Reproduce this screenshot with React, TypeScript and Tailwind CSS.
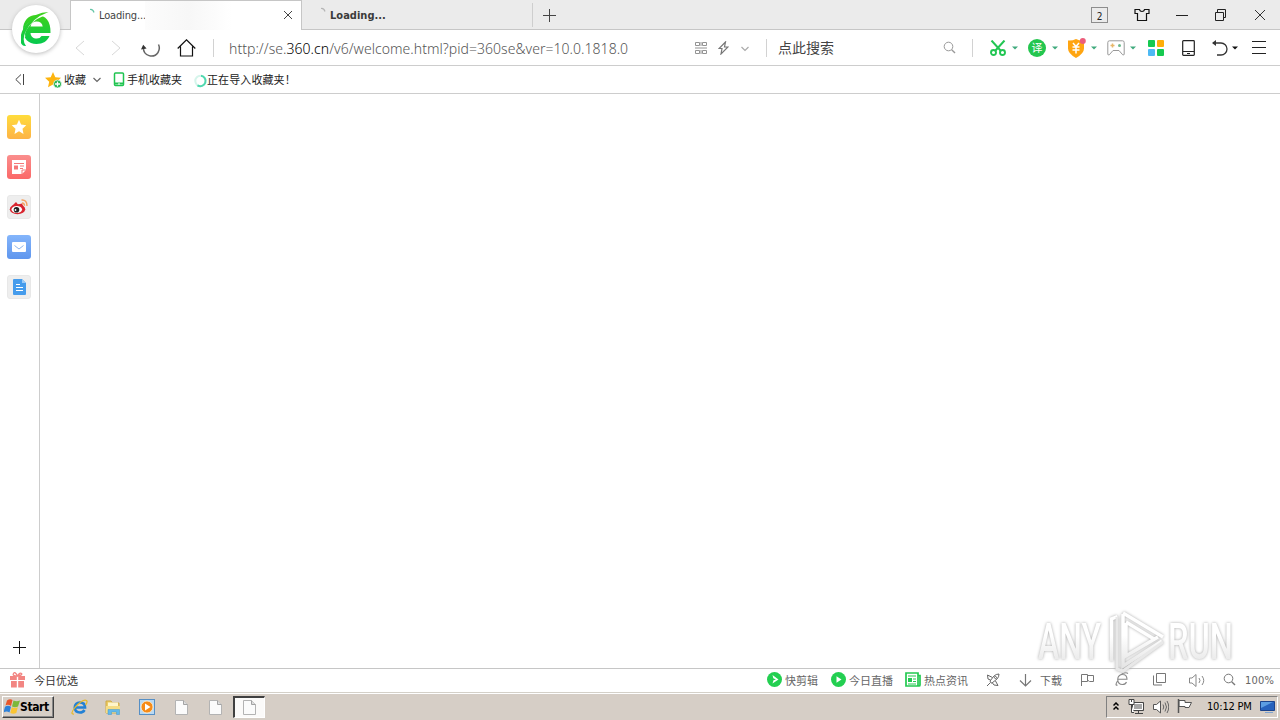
import type { ReactNode } from "react";

type IconProps = { w: number; h: number; className?: string; children: ReactNode };

function Icon({ w, h, className = "", children }: IconProps) {
  return (
    <svg
      width={w}
      height={h}
      viewBox={`0 0 ${w} ${h}`}
      fill="none"
      stroke="currentColor"
      className={`shrink-0 ${className}`}
    >
      {children}
    </svg>
  );
}

function Caret({ className = "" }: { className?: string }) {
  return (
    <Icon w={6} h={4} className={className}>
      <path d="M0 .5h6L3 3.5z" fill="currentColor" stroke="none" />
    </Icon>
  );
}

function Spinner({ className = "" }: { className?: string }) {
  return (
    <Icon w={8} h={8} className={className}>
      <path d="M2 1.500q3-.5 4 3" strokeWidth="1.2" />
    </Icon>
  );
}

function Magnifier({ className = "" }: { className?: string }) {
  return (
    <Icon w={13} h={13} className={className}>
      <circle cx="5.5" cy="5.5" r="4.3" />
      <path d="M8.7 8.7l3.3 3.3" strokeWidth="1.4" />
    </Icon>
  );
}

function TabBar() {
  return (
    <div className="flex h-[30px] shrink-0 items-center border-b border-[#c6c6c6] bg-[#ebebeb] pl-[70px]">
      <div className="-mb-px flex h-[30px] w-[232px] shrink-0 items-center border-x border-t border-[#c6c6c6] bg-white">
        <Spinner className="-mt-2 ml-[17px] text-[#63c5a6]" />
        <span className="ml-[3px] w-[46px] whitespace-nowrap pt-px text-[11px] tracking-[-0.15px] text-[#444]">Loading...</span>
        <div className="h-full w-[87px] bg-linear-to-r from-[#fcfcfc] via-[#f7f7f7] to-white" />
        <Icon w={10} h={10} className="-mt-px ml-[51px] text-[#444]">
          <path d="M1 1l8 8M9 1L1 9" />
        </Icon>
      </div>
      <Spinner className="-mt-2 ml-[17px] text-[#b5b5b5]" />
      <span className="ml-[3px] w-[202px] whitespace-nowrap pt-[3px] text-[11px] font-bold tracking-[0.02px] text-[#3b3b3b]">Loading...</span>
      <div className="h-6 w-px bg-[#cecece]" />
      <Icon w={13} h={13} className="ml-[10px] mt-px text-[#444]">
        <path d="M6.500 0v13M0 6.500h13" />
      </Icon>
      <div className="ml-[535px] mt-px flex h-4 w-[17px] items-center justify-center border border-[#8d8d8d] pt-[2px] text-[10px] text-[#222]">2</div>
      <Icon w={16} h={14} className="ml-[26px] text-[#111]">
        <path d="M5.400 1.500L1 1.500V5.500h2.500V12.500h9V5.500H15V1.500H10.600Q10 3.500 8 3.500T5.400 1.500z" strokeWidth="1.2" />
      </Icon>
      <Icon w={12} h={12} className="ml-[26px] text-[#222]">
        <path d="M0 6.500h12" />
      </Icon>
      <Icon w={11} h={12} className="ml-[27px] text-[#222]">
        <path d="M.5 3.500h8v8h-8zM2.500 3.500v-3h8v8h-2" />
      </Icon>
      <Icon w={12} h={12} className="ml-[28px] text-[#333]">
        <path d="M1 1l10 10M11 1L1 11" />
      </Icon>
    </div>
  );
}

function Toolbar() {
  return (
    <div className="flex h-9 shrink-0 items-center border-b border-[#cdcdcd] bg-white pl-[75px]">
      <Icon w={10} h={16} className="text-[#d8d8d8]"><path d="M9 1L1 8l8 7" /></Icon>
      <Icon w={10} h={16} className="ml-[26px] text-[#d8d8d8]"><path d="M1 1l8 7-8 7" /></Icon>
      <Icon w={20} h={18} className="ml-[20px] text-[#666]">
        <path d="M2.400 9A8 8 0 0 0 17 13.500Q19.400 9.500 17.500 5.500" strokeWidth="1.500" />
        <path d="M0 10.500l2.200-4.700 3.400 3.700z" fill="#333" stroke="none" />
      </Icon>
      <Icon w={19} h={18} className="ml-[16px] text-[#111]">
        <path d="M.7 9.500L9.500 .8l8.800 8.700M3.500 7.500v9.500h12V7.500" strokeWidth="1.200" />
      </Icon>
      <div className="ml-[17px] h-[18px] w-px bg-[#d2d2d2]" />
      <div className="ml-[15px] mt-[2px] w-[465px] whitespace-nowrap font-['Noto_Sans'] text-[14px] font-light tracking-[0.04px] text-[#555]">
        http://se.<span className="text-black">360.cn</span>/v6/welcome.html?pid=360se&amp;ver=10.0.1818.0
      </div>
      <Icon w={12} h={12} className="ml-[1px] text-[#888]">
        <path d="M.5 .5h4v3h-4zM7.500 .5h4v3h-4zM.5 8.500h4v3h-4zM7.500 8.500h4v3h-4zM0 6h12M6 0v4M6 8v4" strokeWidth=".9" />
      </Icon>
      <Icon w={11} h={14} className="ml-[11px] text-[#777]">
        <path d="M7.500 1L1 7.500h3L3 13l7-7H6.500z" strokeWidth="1.200" />
      </Icon>
      <Icon w={8} h={6} className="ml-[12px] mt-[2px] text-[#aaa]"><path d="M.5 1L4 4.500 7.500 1" strokeWidth="1.200" /></Icon>
      <div className="ml-[17px] h-[18px] w-px bg-[#d2d2d2]" />
      <span className="ml-[11px] w-[165px] pt-[2px] text-[14px] text-[#444]">点此搜索</span>
      <Magnifier className="-mt-px text-[#999]" />
      <div className="ml-[16px] h-[18px] w-px bg-[#d2d2d2]" />
      <Icon w={16} h={16} className="ml-[17px] text-[#22c653]">
        <path d="M1.500 .5l9 10M14.500 .5l-9 10" strokeWidth="2" />
        <circle cx="3.500" cy="12.500" r="2.500" strokeWidth="1.900" />
        <circle cx="12.500" cy="12.500" r="2.500" strokeWidth="1.900" />
      </Icon>
      <Caret className="ml-[6px] text-[#3faa7d]" />
      <div className="ml-[10px] flex size-[18px] shrink-0 items-center justify-center rounded-full bg-[#24c64f] pt-px text-[11px] leading-none text-white">译</div>
      <Caret className="ml-[6px] text-[#3faa7d]" />
      <Icon w={19} h={20} className="ml-[9px] text-white">
        <path d="M9 1q4 2 8 1.500v8q0 5-8 9.500-8-4.500-8-9.500v-8Q5 3 9 1z" fill="#ffa511" stroke="none" />
        <path d="M6 5l3 3.500L12 5M5.500 9h7M5.500 12h7M9 8.500v7" strokeWidth="1.500" />
        <circle cx="15.800" cy="3" r="3" fill="#ec5d7b" stroke="none" />
      </Icon>
      <Caret className="ml-[5px] text-[#3faa7d]" />
      <Icon w={18} h={16} className="ml-[10px] text-[#999]">
        <path d="M2.500 .8h13q1.700 0 1.700 1.700V14q0 1.500-1.500 .8L12 10.500H6l-3.700 4.300Q.8 15.500.8 14V2.500Q.8 .8 2.500 .8z" />
        <path d="M3.500 5.500h4M5.500 3.500v4" stroke="#e7b76a" strokeWidth="1.500" />
        <circle cx="12.500" cy="5.500" r="1.500" fill="#6bb98c" stroke="none" />
      </Icon>
      <Caret className="ml-[5px] text-[#3faa7d]" />
      <div className="ml-[12px] grid shrink-0 grid-cols-[7px_7px] gap-[2px]">
        <div className="size-[7px] rounded-[1px] bg-[#16c950]" />
        <div className="size-[7px] rounded-[1px] bg-[#ffae08]" />
        <div className="size-[7px] rounded-[1px] bg-[#4db9f4]" />
        <div className="size-[7px] rounded-[1px] bg-[#16c950]" />
      </div>
      <Icon w={13} h={16} className="ml-[18px] text-[#222]">
        <path d="M.7 1.500q0-.8.800-.8h10q.8 0 .8.800v13q0 .8-.8.800h-10q-.8 0-.8-.800zM1 11.500h11M5 13.500h3" strokeWidth="1.200" />
      </Icon>
      <Icon w={16} h={16} className="ml-[17px] text-[#333]">
        <path d="M1 3h8a6 6 0 0 1 0 12H5" strokeWidth="1.300" />
        <path d="M0 3L4 0v6z" fill="currentColor" stroke="none" />
      </Icon>
      <Caret className="ml-[4px] text-[#111]" />
      <Icon w={14} h={13} className="ml-[14px] text-[#222]">
        <path d="M0 .5h14M0 6.500h14M0 12.500h14" />
      </Icon>
    </div>
  );
}

function BookmarksBar() {
  return (
    <div className="flex h-7 shrink-0 items-center border-b border-[#cdcdcd] bg-white pl-[15px] text-[11px] text-[#222]">
      <Icon w={10} h={11} className="text-[#444]"><path d="M6 .5L.800 5.500 6 10.500M8.500 0v11" /></Icon>
      <Icon w={17} h={16} className="ml-[20px]">
        <path d="M8 0l2.300 5.200 5.700.6-4.200 3.900 1.200 5.600L8 12.500l-5 2.800 1.200-5.600L0 5.800l5.700-.6z" fill="#fdb40e" stroke="none" />
        <circle cx="12.500" cy="12" r="4" fill="#21b24d" stroke="white" strokeWidth=".7" />
        <path d="M10 12h5M12.500 9.500v5" stroke="white" strokeWidth="1.300" />
      </Icon>
      <span className="ml-[2px] w-[22px] whitespace-nowrap pt-[3px]">收藏</span>
      <Icon w={8} h={6} className="ml-[7px] mt-px text-[#666]"><path d="M.5 1L4 4.500 7.500 1" strokeWidth="1.200" /></Icon>
      <Icon w={12} h={15} className="ml-[12px] text-[#20c450]">
        <rect x="1.500" y="1" width="9" height="12.500" rx="1" strokeWidth="1.500" />
        <path d="M2 11.500h8" strokeWidth="2" />
        <path d="M5 12h2" stroke="white" />
      </Icon>
      <span className="ml-[2px] w-[55px] whitespace-nowrap pt-[3px]">手机收藏夹</span>
      <Icon w={14} h={14} className="ml-[12px] mt-[3px] text-[#50d8af]">
        <circle cx="6.500" cy="7" r="5.200" stroke="#d5f5eb" strokeWidth="2" />
        <path d="M7 1.800a5.200 5.200 0 1 1-3.500 9.500" strokeWidth="2" />
      </Icon>
      <span className="-ml-px whitespace-nowrap pt-[3px] tracking-[0.1px]">正在导入收藏夹！</span>
    </div>
  );
}

function Sidebar() {
  return (
    <div className="flex w-10 shrink-0 flex-col border-r border-[#cdcdcd] bg-white pl-[7px] pt-[21px]">
      <div className="flex flex-col gap-4">
        <div className="flex size-6 items-center justify-center rounded-[3px] bg-linear-to-b from-[#ffdc3b] to-[#fdb346]">
          <Icon w={16} h={16}>
            <path d="M8 .8l2.100 4.800 5.200.6-3.800 3.500 1 5.200L8 12.300l-4.500 2.600 1-5.200L.7 6.200l5.200-.6z" fill="white" stroke="none" />
          </Icon>
        </div>
        <div className="flex size-6 items-center justify-center rounded-[3px] bg-linear-to-b from-[#fa8e8d] to-[#fb6868]">
          <Icon w={14} h={14}>
            <path d="M0 0h14v10l-4 4H0z" fill="white" stroke="none" />
            <path d="M2 3.500h10M8 6h4M8 8.500h3" stroke="#f47878" />
            <path d="M2 5.500h4v4H2z" fill="#f47878" stroke="none" />
            <path d="M10 14v-4h4" stroke="#f47878" />
          </Icon>
        </div>
        <div className="flex size-6 items-center justify-center rounded-[3px] border border-[#e8e8e8] bg-[#eeeeee]">
          <Icon w={20} h={18}>
            <ellipse cx="8.500" cy="11.300" rx="7.700" ry="5" fill="#d9252f" stroke="none" />
            <path d="M3 8l4-4 2 2.500 4-1 1.500 3.500-4 3z" fill="#d9252f" stroke="none" />
            <ellipse cx="7.800" cy="11.500" rx="5.300" ry="3.500" fill="white" stroke="none" />
            <circle cx="7.500" cy="11.700" r="2.800" fill="#222" stroke="none" />
            <circle cx="6.500" cy="12" r=".9" fill="white" stroke="none" />
            <path d="M12.500 2q5.500-.5 5.500 6M13 5q2.500 0 2.500 2.800" stroke="#f5a160" strokeWidth="1.400" />
          </Icon>
        </div>
        <div className="flex size-6 items-center justify-center rounded-[3px] bg-linear-to-b from-[#84b5fb] to-[#5f96ee]">
          <Icon w={14} h={10}>
            <rect width="14" height="10" rx="1" fill="white" stroke="none" />
            <path d="M2.500 3.500L7 7l4.500-3.500" stroke="#8eb5ee" />
          </Icon>
        </div>
        <div className="flex size-6 items-center justify-center rounded-[3px] border border-[#e8e8e8] bg-[#eeeeee]">
          <Icon w={13} h={16}>
            <path d="M1 0h8l4 4v11q0 1-1 1H1q-1 0-1-1V1q0-1 1-1z" fill="#469cec" stroke="none" />
            <path d="M9 0v4h4" fill="#9dccf8" stroke="none" />
            <path d="M3 5.500h4M3 8.500h7M3 11.500h7" stroke="white" />
          </Icon>
        </div>
      </div>
      <Icon w={13} h={13} className="mb-[14px] ml-[6px] mt-auto text-[#111]">
        <path d="M6.500 0v13M0 6.500h13" />
      </Icon>
    </div>
  );
}

function StatusBar() {
  return (
    <div className="flex h-6 shrink-0 items-center border-t border-[#c6c6c6] bg-white pl-[10px] text-[11px] text-[#666]">
      <Icon w={15} h={16} className="-mt-[2px]">
        <path d="M7.500 4Q2 4 3.500 1.500T7.500 4Q10 0 11.500 1.500T7.500 4" stroke="#f28582" strokeWidth="1.300" />
        <path d="M0 4h6.800v4H0zM8.200 4H15v4H8.200zM1 9h5.800v6.500H1zM8.200 9H14v6.500H8.200z" fill="#f28582" stroke="none" />
      </Icon>
      <span className="ml-[9px] w-[733px] pt-[3px] text-[#333]">今日优选</span>
      <Icon w={15} h={15} className="-mt-[2px]">
        <circle cx="7.500" cy="7.500" r="7.500" fill="#23cf51" stroke="none" />
        <path d="M5.500 3l6 4.500-6 4 1-3.200L9 7.500 6.300 6.300z" fill="white" stroke="none" />
      </Icon>
      <span className="ml-[3px] w-[46px] whitespace-nowrap pt-[3px]">快剪辑</span>
      <Icon w={15} h={15} className="-mt-[2px]">
        <circle cx="7.500" cy="7.500" r="7.500" fill="#23cf51" stroke="none" />
        <path d="M5.500 4.200l5 3.300-5 3.300z" fill="white" stroke="none" />
      </Icon>
      <span className="ml-[3px] w-[56px] whitespace-nowrap pt-[3px]">今日直播</span>
      <Icon w={16} h={15} className="-mt-[2px] text-[#23c950]">
        <path d="M1 1h12v13H1zM13 3.500h2V13q0 1-1 1H2" strokeWidth="1.700" />
        <path d="M3 4h8M8 7h3M8 9.500h3M3 12h8" />
        <path d="M3 6h4v4H3z" fill="currentColor" stroke="none" />
      </Icon>
      <span className="ml-[3px] w-[62px] whitespace-nowrap pt-[3px]">热点资讯</span>
      <Icon w={14} h={14} className="-mt-px text-[#666]">
        <path d="M5 10L4 8l4-5q2-2 5-2 0 3-2 5l-5 4zM6.500 4.500L1.500 2l.5 4 2.500 1M9.500 8l2.500 4.500-4-.5-1.500-2M1 13l3-3" />
        <circle cx="9.500" cy="4.500" r="1" />
      </Icon>
      <Icon w={13} h={13} className="ml-[19px] text-[#777]"><path d="M6.500 0v12M1 6.500L6.500 12 12 6.500" strokeWidth="1.200" /></Icon>
      <span className="ml-[8px] w-[41px] whitespace-nowrap pt-[3px]">下载</span>
      <Icon w={14} h={12} className="-mt-px text-[#777]">
        <path d="M.5 12V.5h6v7h-6M6.500 1.500h6v6h-4l-2-1.500" />
      </Icon>
      <Icon w={16} h={14} className="ml-[19px] -mt-[3px] text-[#888]">
        <path d="M3.800 7.300H13Q13 2.500 8.500 2.500T3.700 7.500Q4 12.500 8.500 12.500 11.500 12.500 12.500 10M3.500 9Q.5 14 3.500 13M5 4Q11-.8 14 1.500" strokeWidth="1.100" />
      </Icon>
      <Icon w={14} h={13} className="ml-[22px] -mt-[2px] text-[#777]">
        <path d="M4.500 .5h9v9h-9zM1.500 2.500v9.500H10" />
      </Icon>
      <Icon w={16} h={13} className="ml-[23px] -mt-px text-[#888]">
        <path d="M.5 4H3l4-3.500v12L3 9H.5zM10 4q2 2.500 0 5M13 2q3.500 4.500 0 9" />
      </Icon>
      <Magnifier className="ml-[18px] -mt-[2px] text-[#777]" />
      <span className="ml-[9px] whitespace-nowrap pt-[2px] text-[11px] tracking-[0.2px]">100%</span>
    </div>
  );
}

function FileIcon({ className = "" }: { className?: string }) {
  return (
    <Icon w={13} h={15} className={className}>
      <path d="M.5 .5h8l4 4v10H.5z" fill="#fbfbfb" stroke="#b3b3b3" />
      <path d="M8.500 .5v4h4" fill="#ddd" stroke="#a3a3a3" />
    </Icon>
  );
}

function Taskbar() {
  return (
    <div className="flex h-7 shrink-0 items-center border-t border-[#d4d0c8] bg-[#d6cec6] pl-[2px] shadow-[inset_0_1px_white]">
      <div className="flex h-[22px] w-[52px] shrink-0 items-center border border-b-[#404040] border-l-white border-r-[#404040] border-t-white pl-px shadow-[inset_-1px_-1px_#888]">
        <Icon w={16} h={16} className="-mt-px">
          <path d="M3 2.500q3-2 5.500-.5L7 8Q4 6 1.500 7.500z" fill="#e8572b" stroke="none" />
          <path d="M9.500 2.500q3 1.500 6.500 0L14 8.500q-3 1.500-6 0z" fill="#7cb83a" stroke="none" />
          <path d="M1 8.800q3-2 6 0L5.500 14.500q-3-2-6 0z" fill="#2d81d9" stroke="none" />
          <path d="M7.800 9.300q3 1.500 6 0L12.300 15q-3 1.500-6 0z" fill="#fac433" stroke="none" />
        </Icon>
        <span className="whitespace-nowrap text-[12px] font-bold tracking-[-0.4px] text-black">Start</span>
      </div>
      <Icon w={17} h={16} className="ml-[17px]">
        <path d="M4.500 8.500h9.500Q14 3.500 9 3.500T3.800 8.800Q4 13.500 9 13.500 12 13.500 13.500 11" stroke="#2381d5" strokeWidth="2.700" />
        <path d="M3 15Q-1.500 15.500 4 8.500 12-.5 15.500 1.500 17 3 14.500 6" stroke="#e7b928" strokeWidth="1.200" />
      </Icon>
      <Icon w={16} h={16} className="ml-[17px]">
        <path d="M1 2h5l1.500 2H14v10H1z" fill="#eccb62" stroke="#ceaa48" />
        <path d="M3 3.500h10v5H3z" fill="#fff6ca" stroke="none" />
        <path d="M1 7h14v7H1z" fill="#f5dd85" stroke="none" />
        <path d="M3 15.500v-5h11.500v5h-3v-2.500H6.500v2.500z" fill="#63b9ea" stroke="#4297cb" strokeWidth=".5" />
      </Icon>
      <Icon w={16} h={16} className="ml-[18px]">
        <rect x=".5" y=".5" width="15" height="15" fill="#b9d9f3" stroke="#568fc5" />
        <circle cx="8" cy="8" r="6" fill="#f68b18" stroke="#fff0d5" strokeWidth=".8" />
        <path d="M6 4.500L11.500 8 6 11.500z" fill="white" stroke="none" />
      </Icon>
      <FileIcon className="ml-[20px] mt-px" />
      <FileIcon className="ml-[21px] mt-px" />
      <div className="ml-[11px] flex h-[22px] w-[32px] shrink-0 items-center justify-center border-2 border-b border-r border-b-white border-l-[#404040] border-r-white border-t-[#404040] bg-[#fbfaf9]">
        <FileIcon />
      </div>
      <div className="ml-auto mr-[2px] flex h-[22px] w-[172px] items-center border border-b-white border-l-[#808080] border-r-white border-t-[#808080] pl-[6px]">
        <Icon w={6} h={9} className="-mt-px text-black"><path d="M.5 3.500L3 1l2.500 2.500M.5 7.500L3 5l2.500 2.500" strokeWidth="1.500" /></Icon>
        <Icon w={17} h={16} className="ml-[9px]">
          <path d="M4.500 3.500h11v8h-11z" fill="#a7a7a7" stroke="#444" />
          <path d="M5.500 4.500h9v6h-9z" stroke="white" />
          <path d="M7 14.500h8M10.500 12v2" stroke="#444" />
          <path d="M1 .5h5v5H1zM3.500 5.500v8H6" fill="white" stroke="#444" />
          <path d="M3.500 0v3" stroke="#444" />
        </Icon>
        <Icon w={16} h={14} className="ml-[8px]">
          <path d="M.5 4.500h3L7.500 1v12l-4-3.500h-3z" fill="white" stroke="#555" />
          <path d="M10 4.500q1.500 2.500 0 5M12 2.500q3 4.500 0 9M14 1q3.500 6 0 12" stroke="#666" />
        </Icon>
        <Icon w={16} h={15} className="ml-[8px]">
          <path d="M2 1.500h6v2h6.500l-2.500 5H8v-1H2z" fill="white" stroke="#555" />
          <path d="M1.500 0v14" stroke="#555" strokeWidth="1.500" />
        </Icon>
        <span className="ml-[14px] w-[48px] whitespace-nowrap pt-px text-[11px] tracking-[-0.18px] text-black">10:12 PM</span>
        <Icon w={15} h={13} className="ml-[5px]">
          <path d="M.5 1.500h14v9H.5z" fill="#2662bd" stroke="#1c448c" />
          <path d="M1 2h12L1 8z" fill="#5b9de2" stroke="none" />
          <path d="M5 12.500h8" stroke="#80a4d0" />
        </Icon>
      </div>
    </div>
  );
}

function BrowserLogo() {
  return (
    <div className="absolute left-[12px] top-[5px] flex size-[48px] items-center justify-center rounded-full bg-white shadow-[0_1px_4px_#bbb]">
      <svg width="30" height="38" viewBox="0 0 30 38" fill="none">
        <defs>
          <linearGradient id="leaf" x1="0" y1="0" x2="0" y2="1">
            <stop stopColor="#3ed21b" />
            <stop offset="1" stopColor="#06c94f" />
          </linearGradient>
        </defs>
        <path d="M15.500 5C7.500 5 2 11 2 19.500c0 9 5.500 14.500 13.500 14.500 6.500 0 11-3 13-8h-8q-1.500 2.500-4.700 2.500c-3.800 0-6-2-6.300-5.500h20C30 11 24.500 5 15.500 5zM9.500 16.500q1-5 6.200-5t6 5z" fill="url(#leaf)" />
        <path d="M27 3Q15 6 8 14T3 27" stroke="white" strokeWidth="3" />
        <path d="M27.500 2Q14 2 6.500 13C0 20-2 29 .5 34Q2 36.500 5 36 1 31 4 23 10.500 8 27.500 2z" fill="url(#leaf)" />
      </svg>
    </div>
  );
}

function Watermark() {
  return (
    <svg
      className="pointer-events-none absolute left-[1030px] top-[602px] overflow-visible drop-shadow-[0_0_1.5px_#aaa]"
      width="216"
      height="76"
      viewBox="0 0 216 76"
      fill="none"
    >
      <defs>
        <linearGradient id="fade" gradientUnits="userSpaceOnUse" x1="0" y1="16" x2="0" y2="66">
          <stop offset=".35" stopColor="white" />
          <stop offset="1" stopColor="#e4e4e4" />
        </linearGradient>
      </defs>
      <g fill="url(#fade)" fontFamily="Roboto" fontWeight="500" fontSize="50">
        <text x="8" y="57" textLength="63" lengthAdjust="spacingAndGlyphs">ANY</text>
        <text x="138" y="57" textLength="65" lengthAdjust="spacingAndGlyphs">RUN</text>
      </g>
      <path d="M81.500 59V17l6-2.500M93 12v52l39-25M93 11l40 24M96 21v33l32-19M96 20l28 17" stroke="url(#fade)" strokeWidth="3.500" />
      <path d="M87 15v52l6 2 40-29" stroke="#e8e8e8" strokeWidth="3" />
    </svg>
  );
}

export default function App() {
  return (
    <div className="relative flex h-[720px] w-[1280px] flex-col overflow-hidden bg-white font-[Tahoma,'DejaVu_Sans_Condensed','Noto_Sans_CJK_SC',sans-serif]">
      <TabBar />
      <Toolbar />
      <BookmarksBar />
      <div className="flex min-h-0 flex-1">
        <Sidebar />
        <main className="flex-1 bg-white" />
      </div>
      <StatusBar />
      <Taskbar />
      <BrowserLogo />
      <Watermark />
    </div>
  );
}
